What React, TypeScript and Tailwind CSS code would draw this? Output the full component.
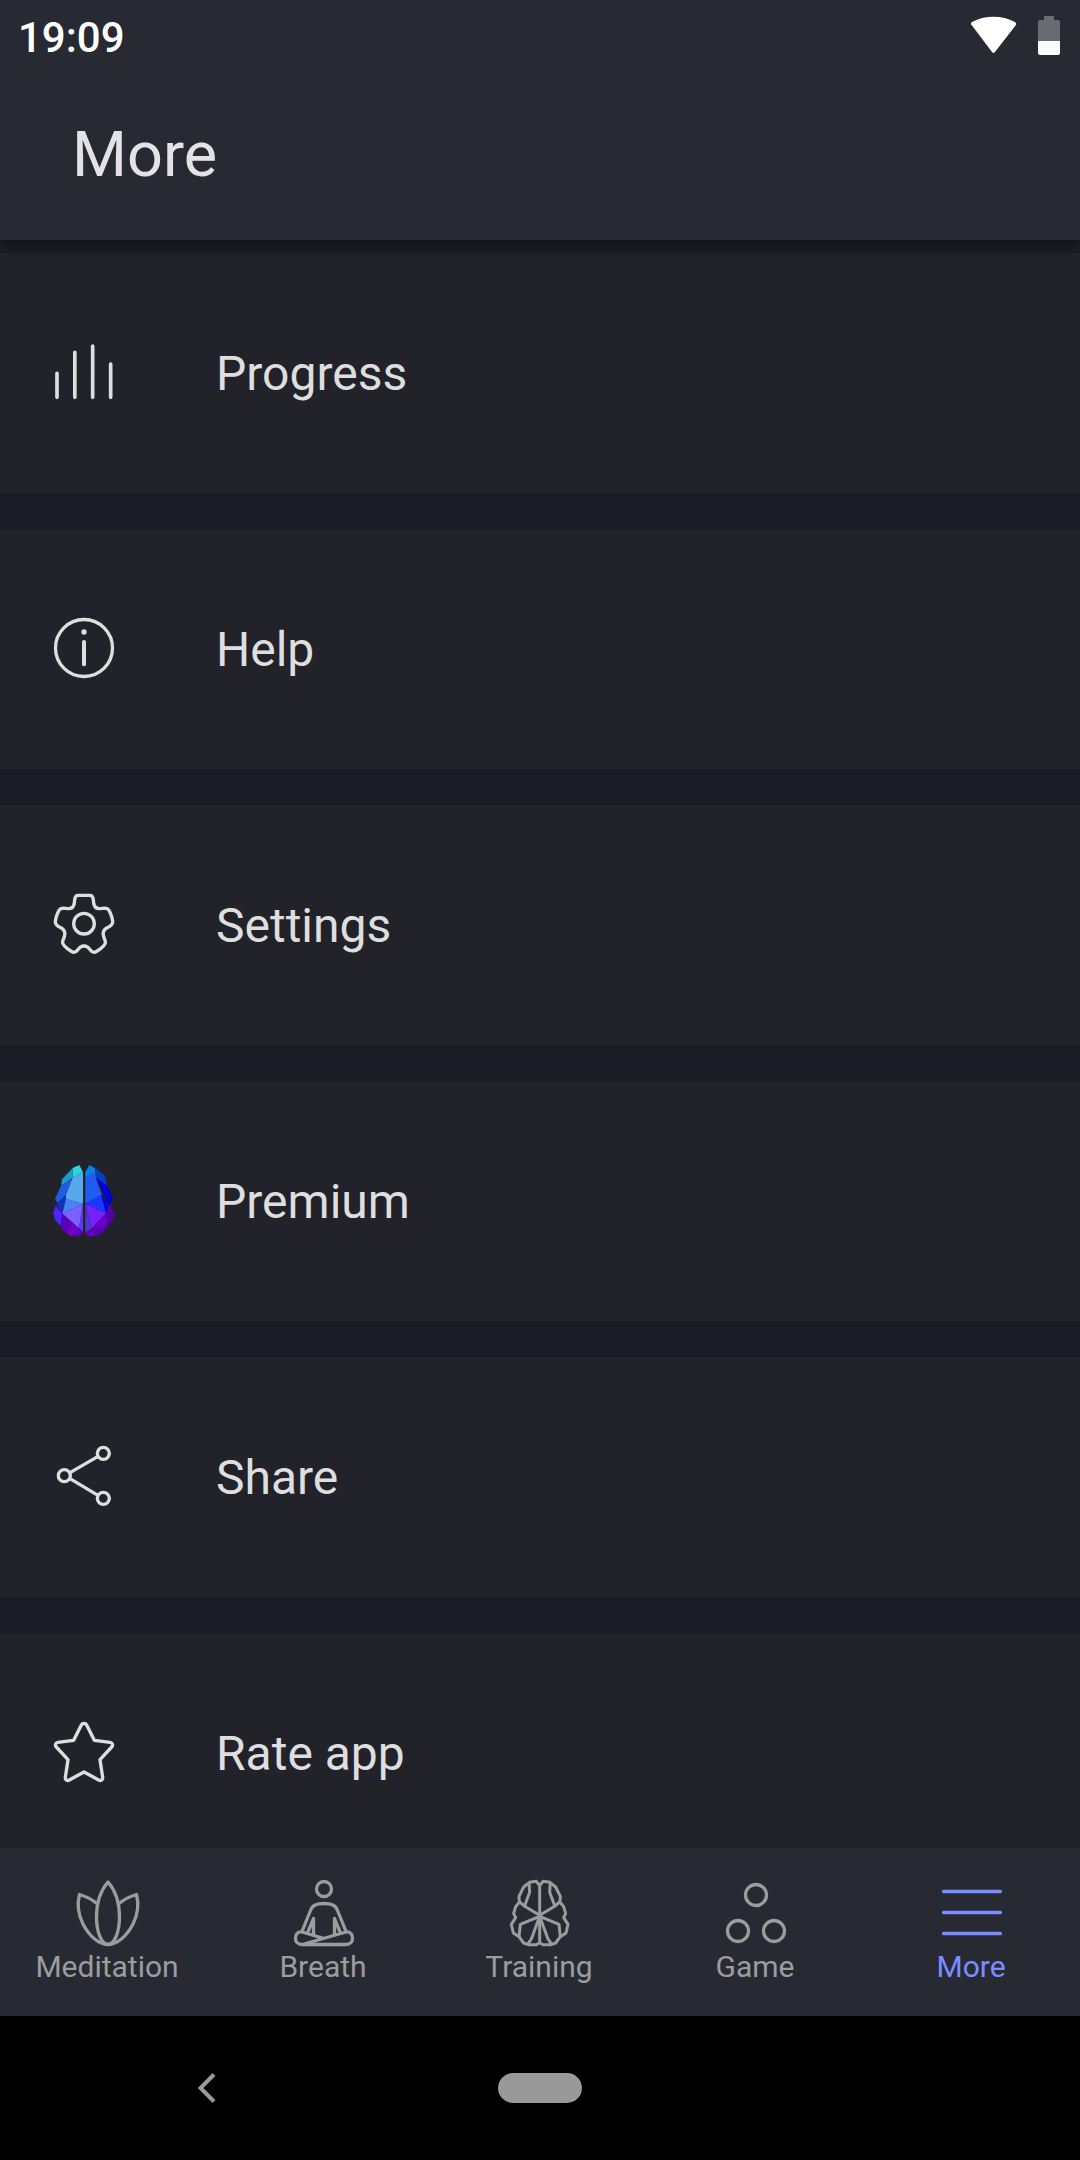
import type { ReactNode } from "react";

function ProgressIcon() {
  return (
    <svg viewBox="24 51 216 216" className="size-18 shrink-0" fill="none" stroke="currentColor" strokeWidth="11" strokeLinecap="round">
      <path d="M51 160v72M104.500 97v135M158 78v154M212 132v100" />
    </svg>
  );
}

function HelpIcon() {
  return (
    <svg viewBox="24 39 216 216" className="size-18 shrink-0" fill="none" stroke="currentColor" strokeWidth="10" strokeLinecap="round">
      <circle cx="132" cy="144" r="85.5" />
      <circle cx="132" cy="96" r="8" fill="currentColor" stroke="none" />
      <path d="M132 126v67" strokeWidth="12" />
    </svg>
  );
}

function SettingsIcon() {
  return (
    <svg viewBox="24 42 216 216" className="size-18 shrink-0" fill="none" stroke="currentColor" strokeWidth="10" strokeLinejoin="round">
      <path d="M114 61C107 61 105 66 104 74L103 84C102 96 94 101 84 101C78 101 68 98 62 101C54 106 47 128 46 140C46 152 56 155 64 159C72 164 76 170 74 180C73 190 66 196 68 205C73 216 92 229 101 232C112 233 114 220 122 216C126 213 129 213 132 213C135 213 138 213 142 216C150 220 152 233 163 232C172 229 191 216 196 205C198 196 191 190 190 180C188 170 192 164 200 159C208 155 218 152 218 140C217 128 210 106 202 101C196 98 186 101 180 101C170 101 162 96 161 84L160 74C159 66 157 61 150 61Z" />
      <circle cx="132" cy="146" r="31" />
    </svg>
  );
}

function PremiumIcon() {
  return (
    <svg viewBox="24 45 216 216" className="size-18 shrink-0">
      <path fill="#1c9cc4" d="M98 54V83L63 107L66 88Z" />
      <path fill="#29d3e2" d="M98 54L118 45L129 67L98 83Z" />
      <path fill="#1f5ce0" d="M98 83L63 107L45 147L55 160L78 135Z" />
      <path fill="#0d35b5" d="M78 135L80 147L67 191L50 160Z" />
      <path fill="#55a8ea" d="M129 67V161L78 147V135L98 83Z" />
      <path fill="#4c80f5" d="M129 161L78 146L67 191Z" />
      <path fill="#3c10b8" d="M46 166L55 165L67 191L52 190Z" />
      <path fill="#4d25ff" d="M46 168L67 191L62 227L47 212L39 190Z" />
      <path fill="#7a60ff" d="M129 161L67 191L117 235Z" />
      <path fill="#5c36ff" d="M129 161V247L117 235Z" />
      <path fill="#5a00bb" d="M67 191L98 218L92 258L67 240L62 225Z" />
      <path fill="#7300cc" d="M98 218L117 235L92 258L80 250Z" />
      <path fill="#6200c0" d="M117 235L129 247L118 258H92Z" />
      <path fill="#0784e0" d="M136 67L148 45L166 55V68L136 82Z" />
      <path fill="#0440c2" d="M166 54L195 76L201 108L167 84V68Z" />
      <path fill="#1f5cf0" d="M136 80L167 66V82L186 135L136 161Z" />
      <path fill="#0000dc" d="M167 82L201 107L213 132L218 148L208 165Z" />
      <path fill="#0006b4" d="M208 165L218 148L201 107L214 130Z" />
      <path fill="#1c36ff" d="M136 161L184 134L198 190Z" />
      <path fill="#0000e6" d="M184 134L208 163L198 190Z" />
      <path fill="#7420ff" d="M136 161L198 190L154 236Z" />
      <path fill="#4c36cc" d="M136 161L154 236L136 247Z" />
      <path fill="#5500a8" d="M208 163L225 190L218 213L201 229L198 190Z" />
      <path fill="#6a00cc" d="M198 190L201 229L165 235L154 236Z" />
      <path fill="#5800b8" d="M154 236L201 228L196 240L171 258Z" />
      <path fill="#6400c4" d="M136 247L154 236L171 258H146L136 250Z" />
    </svg>
  );
}

function ShareIcon() {
  return (
    <svg viewBox="24 48 216 216" className="size-18 shrink-0" fill="none" stroke="currentColor" strokeWidth="10">
      <circle cx="73" cy="152" r="18" />
      <circle cx="190" cy="85" r="18" />
      <circle cx="190" cy="220" r="18" />
      <path d="M90 143L173 95M90 161L174 211" />
    </svg>
  );
}

function StarIcon() {
  return (
    <svg viewBox="24 51 216 216" className="size-18 shrink-0" fill="none" stroke="currentColor" strokeWidth="10" strokeLinejoin="round">
      <path d="M124 75C127 69 137 69 140 75L163 121L210 127C218 128 220 136 215 141L180 179L188 232C189 239 182 244 176 240L132 216L88 240C82 244 75 239 76 232L84 179L49 141C44 136 46 128 54 127L101 121Z" />
    </svg>
  );
}

function MeditationIcon() {
  return (
    <svg viewBox="0 0 72 72" className="size-18" fill="none" stroke="currentColor" strokeWidth="3.3" strokeLinejoin="round">
      <path d="M36 5C29 13 24.500 26 24.500 40C24.500 56 30 67.500 36 67.500C42 67.500 47.500 56 47.500 40C47.500 26 43 13 36 5Z" />
      <path d="M25.500 27C20 22.500 13 19 7.500 17.500C5 27 6 37 11 47C17 59 27 67.500 36 67.500C45 67.500 55 59 61 47C66 37 67 27 64.500 17.500C59 19 52 22.500 46.500 27" />
    </svg>
  );
}

function BreathIcon() {
  return (
    <svg viewBox="0 0 72 72" className="size-18" fill="none" stroke="currentColor" strokeWidth="3.3" strokeLinejoin="round">
      <circle cx="36" cy="12" r="7.5" />
      <path d="M14 54.500L22.500 33.500C24.500 28 28.500 26.500 36 26.500S47.500 28 49.500 33.500L58 54.500" />
      <path d="M19.500 56L25.500 41.500V58M52.500 56L46.500 41.500V58" />
      <path d="M36 61.500L14 55C9 54.500 7.500 58 7.500 61.500C7.500 65 10 67.500 14 67.500H58C62 67.500 64.500 65 64.500 61.500C64.500 58 63 54.500 58 55L16 67" />
    </svg>
  );
}

function TrainingIcon() {
  return (
    <svg viewBox="42 36 216 216" className="size-18" fill="none" stroke="currentColor" strokeWidth="9" strokeLinejoin="round">
      <path d="M149 62L139 49L118 52L101 66L87 94L88 112L77 125L71 145L77 158L64 178L70 204L87 215L101 234L115 239H139L149 233L159 239H183L197 234L211 215L228 204L234 178L221 158L227 145L221 125L210 112L211 94L197 66L180 52L159 49Z" />
      <path d="M149 62V233M117 52L119 82L104 122M181 52L179 82L194 122M88 110L104 124L149 151L194 124L210 110" />
      <path d="M87 215L91 178L149 154L207 178L211 215M149 154L125 220L113 238M149 154L173 220L185 238" />
    </svg>
  );
}

function GameIcon() {
  return (
    <svg viewBox="0 0 72 72" className="size-18" fill="none" stroke="currentColor" strokeWidth="3.3">
      <circle cx="36" cy="18" r="10.5" />
      <circle cx="18" cy="54" r="10.5" />
      <circle cx="54" cy="54" r="10.5" />
    </svg>
  );
}

function MoreIcon() {
  return (
    <svg viewBox="0 0 72 72" className="size-18" fill="none" stroke="currentColor" strokeWidth="3.3" strokeLinecap="round">
      <path d="M7.500 14.500h57M7.500 35.500h57M7.500 56.500h57" />
    </svg>
  );
}

const items: { label: string; icon: ReactNode }[] = [
  { label: "Progress", icon: <ProgressIcon /> },
  { label: "Help", icon: <HelpIcon /> },
  { label: "Settings", icon: <SettingsIcon /> },
  { label: "Premium", icon: <PremiumIcon /> },
  { label: "Share", icon: <ShareIcon /> },
  { label: "Rate app", icon: <StarIcon /> },
];

const tabs: { label: string; icon: ReactNode; active?: boolean }[] = [
  { label: "Meditation", icon: <MeditationIcon /> },
  { label: "Breath", icon: <BreathIcon /> },
  { label: "Training", icon: <TrainingIcon /> },
  { label: "Game", icon: <GameIcon /> },
  { label: "More", icon: <MoreIcon />, active: true },
];

export default function App() {
  return (
    <div className="flex flex-col h-screen bg-[#1a1c25] font-[Roboto,sans-serif] text-[#dededf]">
      <header className="z-10 bg-[#282a33] shadow-[0_4px_10px_rgba(0,0,0,0.3)]">
        <div className="flex items-center justify-between h-18 pl-[18px] pr-5 text-white">
          <span className="pt-1 text-[42px] leading-12 font-medium">19:09</span>
          <div className="flex items-center gap-5">
            <svg viewBox="0 0 48 40" className="w-12 h-10" fill="currentColor">
              <path d="M2 9.500C0.500 8.500 0.700 7 2 6C14.500 -1 32.500 -1 45 6C46.500 7 46.500 8.500 45.500 9.500L25 36C24 37.300 23 37.300 22 36Z" />
            </svg>
            <svg viewBox="0 0 22 40" className="w-[22px] h-10">
              <path fill="#6a6a73" d="M6 0H16V4H20Q22 4 22 6V25H0V6Q0 4 2 4H6Z" />
              <path fill="#fff" d="M0 25H22V37Q22 39 20 39H2Q0 39 0 37Z" />
            </svg>
          </div>
        </div>
        <div className="flex items-center h-42 px-18 pb-0.5 text-[#e3e3e5]">
          <h1 className="text-[63px] leading-18">More</h1>
        </div>
      </header>

      <main className="flex-1 min-h-0 overflow-hidden pt-[13px]">
        <ul className="flex flex-col gap-9">
          {items.map((item) => (
            <li key={item.label}>
              <button className="flex items-center gap-24 w-full h-60 px-12 bg-[#22222b] text-left text-5xl">
                {item.icon}
                <span className="pt-0.5">{item.label}</span>
              </button>
            </li>
          ))}
        </ul>
      </main>

      <nav className="grid grid-cols-5 h-42 bg-[#282a33] text-[#9b9ca0]">
        {tabs.map((tab) => (
          <a
            key={tab.label}
            href="#"
            className={
              tab.active
                ? "flex flex-col items-center pt-[29px] text-[#7b8cff]"
                : "flex flex-col items-center pt-[29px]"
            }
          >
            {tab.icon}
            <span className="pr-0.5 text-[30px] leading-9">{tab.label}</span>
          </a>
        ))}
      </nav>

      <div className="grid grid-cols-3 place-items-center h-36 px-10 bg-black text-[#999999]">
        <button aria-label="Back">
          <svg viewBox="0 0 18 30" className="w-[18px] h-[30px]" fill="none" stroke="currentColor" strokeWidth="4">
            <path d="M16 1.500L2.500 15L16 28.500" />
          </svg>
        </button>
        <button aria-label="Home" className="w-21 h-[30px] rounded-full bg-[#999999]" />
      </div>
    </div>
  );
}
